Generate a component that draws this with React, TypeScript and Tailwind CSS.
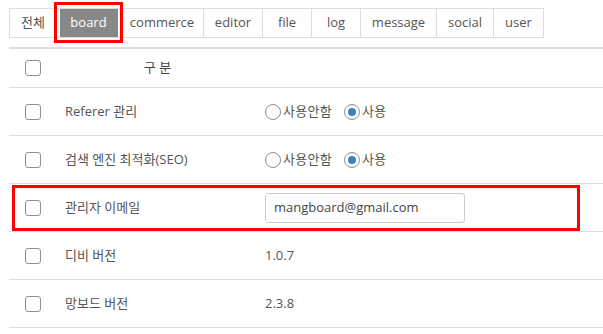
const tabs = [
  { label: '전체', w: 'w-[48px]' },
  { label: 'board', w: 'w-[64px]', active: true },
  { label: 'commerce', w: 'w-[83px]' },
  { label: 'editor', w: 'w-[59px]' },
  { label: 'file', w: 'w-[49px]' },
  { label: 'log', w: 'w-[49px]' },
  { label: 'message', w: 'w-[76px]' },
  { label: 'social', w: 'w-[57px]' },
  { label: 'user', w: 'w-[50px]' },
]

const Checkbox = () => (
  <span className="block h-[16px] w-[16px] rounded-[3px] border border-[#8f8f8f] bg-white" />
)

const Radio = ({ checked, label }: { checked?: boolean; label: string }) => (
  <span className="flex items-center">
    <span className="flex h-[16px] w-[16px] items-center justify-center rounded-full border border-[#8f8f8f] bg-white">
      {checked && <span className="block h-[8px] w-[8px] rounded-full bg-[#3b82c6]" />}
    </span>
    <span className="ml-[2px] tracking-[0.3px]">{label}</span>
  </span>
)

const Row = ({ label, children }: { label: string; children: React.ReactNode }) => (
  <div className="grid h-[48px] grid-cols-[46px_205px_1fr] items-center border-b border-[#dddddd]">
    <div className="pl-[16px]">
      <Checkbox />
    </div>
    <div className="pl-[10px]">{label}</div>
    <div className="pl-[5px]">{children}</div>
  </div>
)

export default function App() {
  return (
    <div
      className="relative h-[334px] w-[603px] overflow-hidden bg-white pl-[9px] text-[13px] text-[#555555]"
      style={{ fontFamily: '"Open Sans", "Noto Sans CJK KR", sans-serif' }}
    >
      {/* Tabs */}
      <div className="pt-[8px]">
        <div className="flex">
          {tabs.map((t, i) => (
            <div
              key={t.label}
              className={`flex h-[30px] items-center justify-center border-y border-r border-[#dddddd] ${t.w} ${i === 0 ? 'border-l' : ''}`}
            >
              {t.active ? (
                <span className="flex h-[28px] w-[58px] items-center justify-center bg-[#888888] text-white">
                  {t.label}
                </span>
              ) : (
                t.label
              )}
            </div>
          ))}
        </div>
      </div>
      <div className="mt-[9px] h-[2px] bg-[#dddddd]" />

      {/* Table */}
      <div className="grid h-[39px] grid-cols-[46px_205px_1fr] items-center border-b border-[#dddddd]">
        <div className="pl-[16px]">
          <Checkbox />
        </div>
        <div className="text-center text-[#444444]">구 분</div>
        <div />
      </div>
      <Row label="Referer 관리">
        <div className="flex items-center gap-[12px]">
          <Radio label="사용안함" />
          <Radio checked label="사용" />
        </div>
      </Row>
      <Row label="검색 엔진 최적화(SEO)">
        <div className="flex items-center gap-[12px]">
          <Radio label="사용안함" />
          <Radio checked label="사용" />
        </div>
      </Row>
      <Row label="관리자 이메일">
        <div className="flex h-[30px] w-[200px] items-center rounded-[3px] border border-[#cccccc] px-[8px] text-[#444444]">
          mangboard@gmail.com
        </div>
      </Row>
      <Row label="디비 버전">1.0.7</Row>
      <Row label="망보드 버전">2.3.8</Row>

      {/* Highlight boxes */}
      <div className="pointer-events-none absolute left-[54px] top-[2px] h-[41px] w-[69px] border-[3px] border-[#ff0000]" />
      <div className="pointer-events-none absolute left-[12px] top-[185px] h-[46px] w-[568px] border-[3px] border-[#ff0000]" />
    </div>
  )
}
